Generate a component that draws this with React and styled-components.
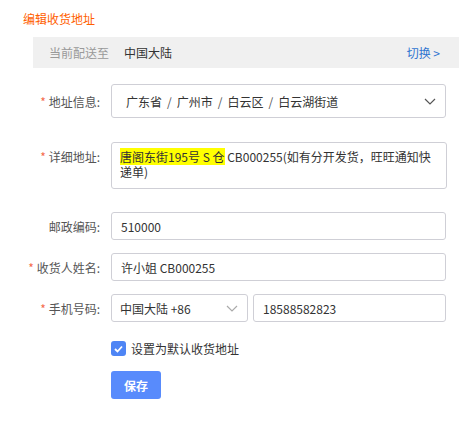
import React from 'react'
import styled, { createGlobalStyle } from 'styled-components'

const GlobalStyle = createGlobalStyle`
  body {
    margin: 0;
    background: #fff;
    font-family: "Noto Sans CJK SC", "Noto Sans", sans-serif;
    font-size: 12px;
    color: #333;
  }
`

function Chevron({ color }) {
  return (
    <svg width="12" height="7" viewBox="0 0 12 7">
      <path d="M1 1 L6 6 L11 1" fill="none" stroke={color} strokeWidth="1.2" />
    </svg>
  )
}

function App() {
  return (
    <Page>
      <GlobalStyle />
      <Title>编辑收货地址</Title>

      <DeliveryBar>
        <Muted>当前配送至</Muted>
        <Region>中国大陆</Region>
        <Switch>切换 &gt;</Switch>
      </DeliveryBar>

      <Form>
        <Row gap={24}>
          <Label><Star>*</Star> 地址信息:</Label>
          <SelectBox height={34} pad={14} width={335}>
            <span>
              广东省<Sep>/</Sep>广州市<Sep>/</Sep>白云区<Sep>/</Sep>白云湖街道
            </span>
            <Chevron color="#555" />
          </SelectBox>
        </Row>

        <Row top gap={23}>
          <Label top><Star>*</Star> 详细地址:</Label>
          <TextArea>
            <Mark>唐阁东街195号 S 仓</Mark> CB000255(如有分开发货，旺旺通知快递单)
          </TextArea>
        </Row>

        <Row gap={13}>
          <Label>邮政编码:</Label>
          <Input width={335}>510000</Input>
        </Row>

        <Row gap={13}>
          <Label><Star>*</Star> 收货人姓名:</Label>
          <Input width={335}>许小姐 CB000255</Input>
        </Row>

        <Row gap={19}>
          <Label><Star>*</Star> 手机号码:</Label>
          <Phone>
            <SelectBox height={28} pad={8} width={137}>
              <span>中国大陆 +86</span>
              <Chevron color="#aaa" />
            </SelectBox>
            <Input width={193}>18588582823</Input>
          </Phone>
        </Row>

        <Check>
          <Box>
            <svg width="9" height="8" viewBox="0 0 9 8">
              <path d="M1 4 L3.5 6.5 L8 1.5" fill="none" stroke="#fff" strokeWidth="1.8" />
            </svg>
          </Box>
          设置为默认收货地址
        </Check>

        <SaveButton>保存</SaveButton>
      </Form>
    </Page>
  )
}

export default App

const Page = styled.div`
  width: 475px;
  padding-top: 11px;
`

const Title = styled.div`
  padding-left: 23px;
  line-height: 16px;
  color: #ff6000;
`

const DeliveryBar = styled.div`
  margin: 10px 0 0 33px;
  width: 426px;
  height: 31px;
  box-sizing: border-box;
  padding: 0 19px 0 16px;
  background: #f0f0f0;
  display: flex;
  align-items: center;
`

const Muted = styled.span`
  color: #999;
`

const Region = styled.span`
  margin-left: 15px;
  color: #333;
  flex: 1;
`

const Switch = styled.span`
  color: #2f74d0;
`

const Form = styled.div`
  margin-top: 16px;
`

const Row = styled.div`
  display: flex;
  align-items: ${p => (p.top ? 'flex-start' : 'center')};
  margin-bottom: ${p => p.gap}px;
`

const Label = styled.div`
  width: 100px;
  margin-right: 11px;
  text-align: right;
  color: #555;
  line-height: 15px;
  padding-top: ${p => (p.top ? '7px' : '0')};
  white-space: nowrap;
`

const Star = styled.span`
  color: #f56c4b;
`

const SelectBox = styled.div`
  width: ${p => p.width}px;
  height: ${p => p.height}px;
  box-sizing: border-box;
  border: 1px solid #cfcfd6;
  border-radius: 3px;
  padding: 0 9px 0 ${p => p.pad}px;
  display: flex;
  align-items: center;
  justify-content: space-between;
  color: #333;
`

const Sep = styled.span`
  margin: 0 5px;
  color: #555;
`

const TextArea = styled.div`
  width: 336px;
  height: 47px;
  box-sizing: border-box;
  border: 1px solid #cfcfd6;
  border-radius: 3px;
  padding: 6px 8px;
  line-height: 15px;
  color: #333;
`

const Mark = styled.span`
  background: #ffff00;
`

const Input = styled.div`
  width: ${p => p.width}px;
  height: 28px;
  box-sizing: border-box;
  border: 1px solid #cfcfd6;
  border-radius: 3px;
  padding: 0 9px;
  display: flex;
  align-items: center;
  color: #333;
`

const Phone = styled.div`
  display: flex;
  gap: 5px;
`

const Check = styled.div`
  margin-left: 111px;
  display: flex;
  align-items: center;
  gap: 5px;
  color: #333;
  line-height: 15px;
`

const Box = styled.span`
  width: 15px;
  height: 15px;
  border-radius: 3px;
  background: #4e85f5;
  display: flex;
  align-items: center;
  justify-content: center;
`

const SaveButton = styled.button`
  margin: 15px 0 0 111px;
  width: 50px;
  height: 28px;
  border: none;
  border-radius: 3px;
  background: #588bfc;
  color: #fff;
  font-family: "Noto Sans CJK SC", sans-serif;
  font-size: 12px;
  font-weight: bold;
  padding: 0;
`
